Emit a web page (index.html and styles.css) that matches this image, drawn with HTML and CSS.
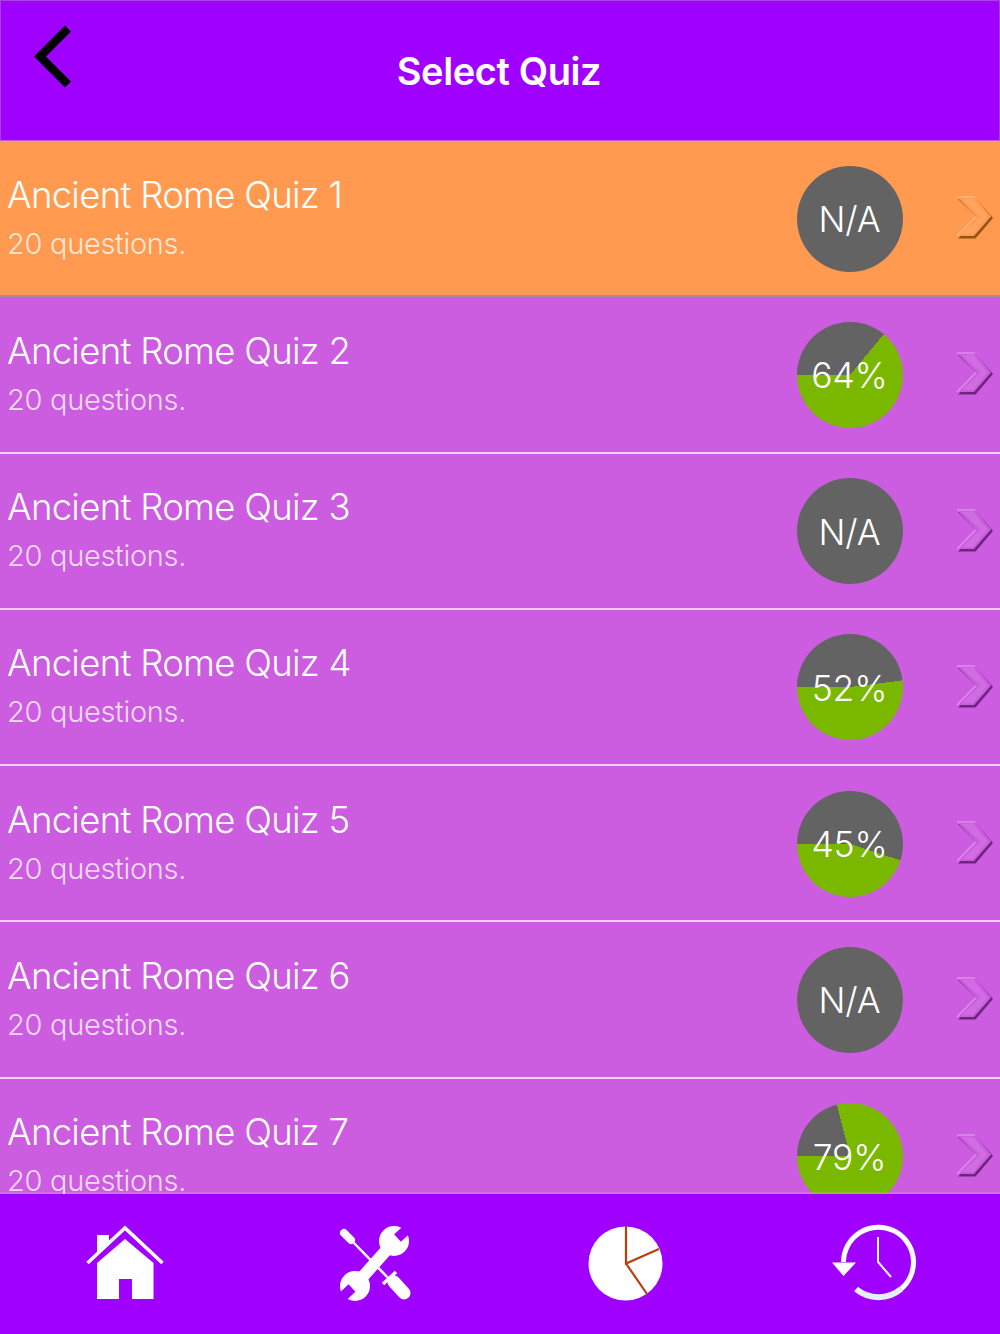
FILE: index.html
```html
<!DOCTYPE html>
<html lang="en">

<head>
    <meta charset="UTF-8">
    <meta name="viewport" content="width=device-width, initial-scale=1.0">
    <title>Select Quiz</title>
    <link rel="stylesheet" href="styles.css">
</head>

<body>
    <div class="screen">
        <header class="top-bar">
            <svg class="back-icon" viewBox="0 0 44 68">
                <path d="M36 5.500 L8 33.500 L36 61.500" />
            </svg>
            <h1>Select Quiz</h1>
        </header>

        <div class="quiz-list">
            <div class="quiz-row current">
                <div class="quiz-text">
                    <div class="quiz-name">Ancient Rome Quiz 1</div>
                    <div class="quiz-count">20 questions.</div>
                </div>
                <div class="score">N/A</div>
                <svg class="row-arrow" viewBox="0 0 40 46"><use href="#arrow" /></svg>
            </div>
            <div class="quiz-row">
                <div class="quiz-text">
                    <div class="quiz-name">Ancient Rome Quiz 2</div>
                    <div class="quiz-count">20 questions.</div>
                </div>
                <div class="score" style="--pct: 64">64%</div>
                <svg class="row-arrow" viewBox="0 0 40 46"><use href="#arrow" /></svg>
            </div>
            <div class="quiz-row">
                <div class="quiz-text">
                    <div class="quiz-name">Ancient Rome Quiz 3</div>
                    <div class="quiz-count">20 questions.</div>
                </div>
                <div class="score">N/A</div>
                <svg class="row-arrow" viewBox="0 0 40 46"><use href="#arrow" /></svg>
            </div>
            <div class="quiz-row">
                <div class="quiz-text">
                    <div class="quiz-name">Ancient Rome Quiz 4</div>
                    <div class="quiz-count">20 questions.</div>
                </div>
                <div class="score" style="--pct: 52">52%</div>
                <svg class="row-arrow" viewBox="0 0 40 46"><use href="#arrow" /></svg>
            </div>
            <div class="quiz-row">
                <div class="quiz-text">
                    <div class="quiz-name">Ancient Rome Quiz 5</div>
                    <div class="quiz-count">20 questions.</div>
                </div>
                <div class="score" style="--pct: 45">45%</div>
                <svg class="row-arrow" viewBox="0 0 40 46"><use href="#arrow" /></svg>
            </div>
            <div class="quiz-row">
                <div class="quiz-text">
                    <div class="quiz-name">Ancient Rome Quiz 6</div>
                    <div class="quiz-count">20 questions.</div>
                </div>
                <div class="score">N/A</div>
                <svg class="row-arrow" viewBox="0 0 40 46"><use href="#arrow" /></svg>
            </div>
            <div class="quiz-row">
                <div class="quiz-text">
                    <div class="quiz-name">Ancient Rome Quiz 7</div>
                    <div class="quiz-count">20 questions.</div>
                </div>
                <div class="score" style="--pct: 79">79%</div>
                <svg class="row-arrow" viewBox="0 0 40 46"><use href="#arrow" /></svg>
            </div>
        </div>

        <nav class="tab-bar">
            <a class="tab">
                <svg viewBox="0 0 96 96">
                    <path class="white-fill" d="M20 19 H32 V27 L20 38 Z" />
                    <path class="roof" d="M10.5 47 L48 12 L85.5 47" />
                    <path class="white-fill" d="M20 47 L48 23 L76.5 47 V83 H55 V63 H42 V83 H20 Z" />
                </svg>
            </a>
            <a class="tab">
                <svg viewBox="0 0 96 96">
                    <path class="driver-shaft" d="M24 24 L70 71" />
                    <path class="driver-tip" d="M17 17 L24 24" />
                    <path class="driver-guard" d="M56 68 L69 56" />
                    <path class="driver-grip" d="M67 66 L77 77" />
                    <path class="wrench-handle" d="M31 66 L64 29" />
                    <circle class="white-fill" cx="67" cy="25" r="15" />
                    <circle class="white-fill" cx="28" cy="70" r="15" />
                    <path class="wrench-jaw" d="M70.500 22 L86 8" />
                    <path class="wrench-jaw" d="M25 72 L9 87" />
                </svg>
            </a>
            <a class="tab">
                <svg viewBox="0 0 96 96">
                    <circle class="white-fill" cx="48.5" cy="47.5" r="37" />
                    <path class="pie-cuts" d="M49 10 V47.500 L82 33 M49 47.500 L70 78" />
                </svg>
            </a>
            <a class="tab">
                <svg viewBox="0 0 96 96">
                    <path class="clock-ring" d="M16.500 46 A35 35 0 1 1 74 73" />
                    <path class="clock-ring low" d="M29 73 A35 35 0 0 0 74 73" />
                    <path class="white-fill" d="M5 46.500 H29 L16.500 60 Z" />
                    <path class="clock-hands" d="M51 21 V46 L64 61" />
                </svg>
            </a>
        </nav>
    </div>

    <svg class="defs">
        <defs>
            <g id="arrow">
                <path class="arrow-shadow" d="M2 4 H20.500 L37 23 L19.500 43.500 H2 L21.500 23 Z" />
                <path class="arrow-face" d="M1 2 H19 L35 21.500 L18 41 H1 L20 21.500 Z" />
                <path class="arrow-band" d="M6 4 H17.500 L31 21.500 L17 39 H6 L24.500 21.500 Z" />
                <path class="arrow-light" d="M1 2 H19 M20 21.500 L1 41" />
            </g>
        </defs>
    </svg>
</body>

</html>
```

FILE: styles.css
```css
body {
    margin: 0;
    background-color: #cc5de0;
    font-family: "Inter", "Liberation Sans", sans-serif;
    color: #fff;
}

.screen {
    display: flex;
    flex-direction: column;
    height: 1334px;
    overflow: hidden;
}

.top-bar {
    display: grid;
    grid-template-columns: 1fr auto 1fr;
    align-items: center;
    flex: none;
    box-sizing: border-box;
    height: 141px;
    padding: 0 2px 0 0;
    background-color: #a000ff;
    border: 1px solid #a840e8;
    border-bottom-color: #c060d0;
}

.top-bar h1 {
    grid-column: 2;
    grid-row: 1;
    margin: 0;
    font-size: 38px;
    font-weight: 600;
    letter-spacing: -0.4px;
}

.back-icon {
    grid-column: 1;
    grid-row: 1;
    width: 44px;
    height: 68px;
    margin: 0 0 28px 31px;
}

.back-icon path {
    fill: none;
    stroke: #000;
    stroke-width: 8.5;
}

.quiz-list {
    flex: 1;
    min-height: 0;
    overflow: hidden;
}

.quiz-row {
    --row-color: #cc5de0;
    --arrow-dark: rgba(85, 25, 100, 0.8);
    display: flex;
    align-items: center;
    box-sizing: border-box;
    height: 156.25px;
    padding: 0 4px 0 7px;
    background-color: var(--row-color);
    border-bottom: 2px solid #f0d0f5;
}

.quiz-row.current {
    --row-color: #ff9a50;
    --arrow-dark: rgba(130, 70, 10, 0.85);
    border-bottom-color: #b08a9a;
}

.quiz-text {
    flex: 1;
}

.quiz-name {
    margin-top: -2px;
    font-size: 36.5px;
    font-weight: 300;
    line-height: 44px;
    letter-spacing: -0.7px;
}

.quiz-count {
    margin-top: 9px;
    font-size: 29px;
    font-weight: 300;
    line-height: 36px;
    letter-spacing: -0.3px;
    color: rgba(255, 255, 255, 0.78);
}

.score {
    --pct: 0;
    display: flex;
    align-items: center;
    justify-content: center;
    flex: none;
    box-sizing: border-box;
    width: 106px;
    height: 106px;
    margin: 1px 53px 0 0;
    padding: 2px 1px 0 0;
    border-radius: 50%;
    background: conic-gradient(from 270deg, #636363 calc((100 - var(--pct)) * 1%), #7ab800 0);
    font-size: 35.500px;
    font-weight: 350;
    letter-spacing: -0.2px;
}

.row-arrow {
    flex: none;
    width: 40px;
    height: 46px;
    overflow: visible;
}

.arrow-shadow {
    fill: var(--arrow-dark);
}

.arrow-face {
    fill: var(--row-color);
}

.arrow-band {
    fill: rgba(255, 255, 255, 0.1);
}

.arrow-light {
    fill: none;
    stroke: rgba(255, 255, 255, 0.3);
    stroke-width: 1.5;
}

.tab-bar {
    display: grid;
    grid-template-columns: repeat(4, 1fr);
    flex: none;
    height: 140px;
    background-color: #a000ff;
    box-shadow: 0 -2px 0 rgba(255, 255, 255, 0.12);
}

.tab {
    display: flex;
    align-items: center;
    justify-content: center;
}

.tab svg {
    width: 96px;
    height: 96px;
}

.white-fill {
    fill: #fff;
}

.roof {
    fill: none;
    stroke: #fff;
    stroke-width: 3.5;
}

.driver-shaft {
    fill: none;
    stroke: #fff;
    stroke-width: 2.5;
}

.driver-tip {
    fill: none;
    stroke: #fff;
    stroke-width: 8;
    stroke-linecap: round;
}

.driver-guard {
    fill: none;
    stroke: #fff;
    stroke-width: 3.5;
}

.driver-grip {
    fill: none;
    stroke: #fff;
    stroke-width: 13;
    stroke-linecap: round;
}

.wrench-handle {
    fill: none;
    stroke: #fff;
    stroke-width: 12;
}

.wrench-jaw {
    fill: none;
    stroke: #a000ff;
    stroke-width: 10;
}

.pie-cuts {
    fill: none;
    stroke: #b8400f;
    stroke-width: 2.2;
}

.clock-ring {
    fill: none;
    stroke: #fff;
    stroke-width: 5;
}

.clock-ring.low {
    stroke: #e3f0f5;
    stroke-width: 6;
}

.clock-hands {
    fill: none;
    stroke: #fff;
    stroke-width: 2;
}

.defs {
    position: absolute;
    width: 0;
    height: 0;
}
```
